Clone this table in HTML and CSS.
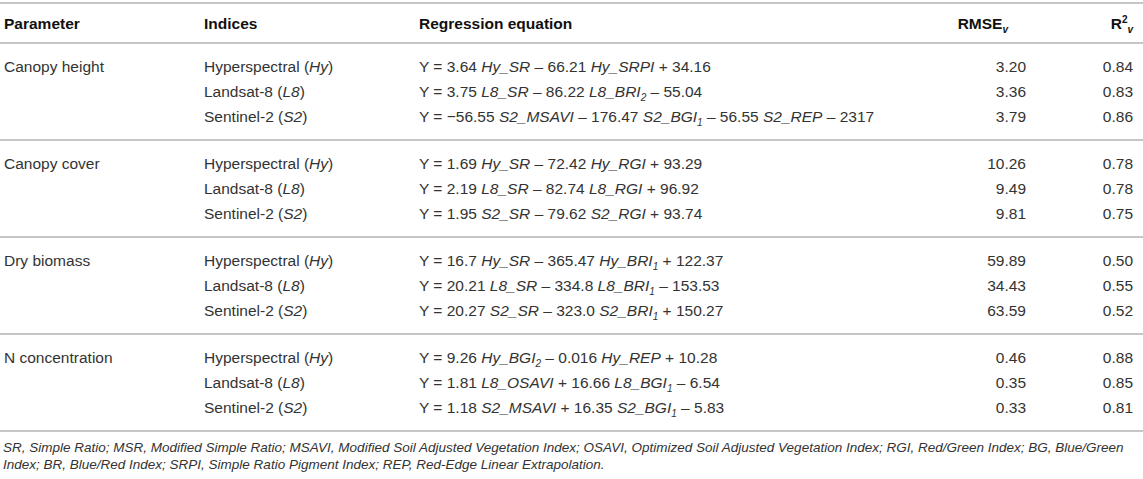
FILE: index.html
```html
<!DOCTYPE html>
<html>
<head>
    <title>Regression models</title>
    <link rel="stylesheet" href="styles.css">
</head>
<body>
    <table class="results">
        <colgroup>
            <col class="c-param">
            <col class="c-index">
            <col class="c-eq">
            <col class="c-rmse">
            <col class="c-r2">
        </colgroup>
        <thead>
            <tr>
                <th>Parameter</th>
                <th>Indices</th>
                <th>Regression equation</th>
                <th class="num">RMSE<sub>v</sub></th>
                <th class="num">R<sup>2</sup><sub>v</sub></th>
            </tr>
        </thead>
        <tbody>
            <tr class="first">
                <td>Canopy height</td>
                <td>Hyperspectral (<i>Hy</i>)</td>
                <td>Y = 3.64 <i>Hy_SR</i> – 66.21 <i>Hy_SRPI</i> + 34.16</td>
                <td class="num">3.20</td>
                <td class="num">0.84</td>
            </tr>
            <tr>
                <td></td>
                <td>Landsat-8 (<i>L8</i>)</td>
                <td>Y = 3.75 <i>L8_SR</i> – 86.22 <i>L8_BRI<sub>2</sub></i> – 55.04</td>
                <td class="num">3.36</td>
                <td class="num">0.83</td>
            </tr>
            <tr class="last">
                <td></td>
                <td>Sentinel-2 (<i>S2</i>)</td>
                <td>Y = −56.55 <i>S2_MSAVI</i> – 176.47 <i>S2_BGI<sub>1</sub></i> – 56.55 <i>S2_REP</i> – 2317</td>
                <td class="num">3.79</td>
                <td class="num">0.86</td>
            </tr>
        </tbody>
        <tbody>
            <tr class="first">
                <td>Canopy cover</td>
                <td>Hyperspectral (<i>Hy</i>)</td>
                <td>Y = 1.69 <i>Hy_SR</i> – 72.42 <i>Hy_RGI</i> + 93.29</td>
                <td class="num">10.26</td>
                <td class="num">0.78</td>
            </tr>
            <tr>
                <td></td>
                <td>Landsat-8 (<i>L8</i>)</td>
                <td>Y = 2.19 <i>L8_SR</i> – 82.74 <i>L8_RGI</i> + 96.92</td>
                <td class="num">9.49</td>
                <td class="num">0.78</td>
            </tr>
            <tr class="last">
                <td></td>
                <td>Sentinel-2 (<i>S2</i>)</td>
                <td>Y = 1.95 <i>S2_SR</i> – 79.62 <i>S2_RGI</i> + 93.74</td>
                <td class="num">9.81</td>
                <td class="num">0.75</td>
            </tr>
        </tbody>
        <tbody>
            <tr class="first">
                <td>Dry biomass</td>
                <td>Hyperspectral (<i>Hy</i>)</td>
                <td>Y = 16.7 <i>Hy_SR</i> – 365.47 <i>Hy_BRI<sub>1</sub></i> + 122.37</td>
                <td class="num">59.89</td>
                <td class="num">0.50</td>
            </tr>
            <tr>
                <td></td>
                <td>Landsat-8 (<i>L8</i>)</td>
                <td>Y = 20.21 <i>L8_SR</i> – 334.8 <i>L8_BRI<sub>1</sub></i> – 153.53</td>
                <td class="num">34.43</td>
                <td class="num">0.55</td>
            </tr>
            <tr class="last">
                <td></td>
                <td>Sentinel-2 (<i>S2</i>)</td>
                <td>Y = 20.27 <i>S2_SR</i> – 323.0 <i>S2_BRI<sub>1</sub></i> + 150.27</td>
                <td class="num">63.59</td>
                <td class="num">0.52</td>
            </tr>
        </tbody>
        <tbody>
            <tr class="first">
                <td>N concentration</td>
                <td>Hyperspectral (<i>Hy</i>)</td>
                <td>Y = 9.26 <i>Hy_BGI<sub>2</sub></i> – 0.016 <i>Hy_REP</i> + 10.28</td>
                <td class="num">0.46</td>
                <td class="num">0.88</td>
            </tr>
            <tr>
                <td></td>
                <td>Landsat-8 (<i>L8</i>)</td>
                <td>Y = 1.81 <i>L8_OSAVI</i> + 16.66 <i>L8_BGI<sub>1</sub></i> – 6.54</td>
                <td class="num">0.35</td>
                <td class="num">0.85</td>
            </tr>
            <tr class="last">
                <td></td>
                <td>Sentinel-2 (<i>S2</i>)</td>
                <td>Y = 1.18 <i>S2_MSAVI</i> + 16.35 <i>S2_BGI<sub>1</sub></i> – 5.83</td>
                <td class="num">0.33</td>
                <td class="num">0.81</td>
            </tr>
        </tbody>
    </table>
    <p class="note">SR, Simple Ratio; MSR, Modified Simple Ratio; MSAVI, Modified Soil Adjusted Vegetation Index; OSAVI, Optimized Soil Adjusted Vegetation Index; RGI, Red/Green Index; BG, Blue/Green Index; BR, Blue/Red Index; SRPI, Simple Ratio Pigment Index; REP, Red-Edge Linear Extrapolation.</p>
</body>
</html>
```
FILE: styles.css
```css
body {
    margin: 0;
    background: #fff;
    color: #333;
    font-family: "Liberation Sans", Arial, sans-serif;
    font-size: 15px;
}

.results {
    width: 1143px;
    margin-top: 2px;
    font-size: 15.5px;
    border-collapse: collapse;
    table-layout: fixed;
    border-top: 2px solid #c6c6c6;
    border-bottom: 2px solid #c6c6c6;
}

.c-param { width: 200px; }
.c-index { width: 215px; }
.c-eq { width: 485px; }
.c-rmse { width: 130px; }
.c-r2 { width: 113px; }

.results th {
    height: 38px;
    padding: 0 4px;
    text-align: left;
    font-weight: bold;
    color: #111;
    line-height: 17px;
    border-bottom: 2px solid #c6c6c6;
}

.results td {
    height: 25px;
    padding: 0 4px;
    line-height: 17px;
    white-space: nowrap;
}

.results tbody + tbody {
    border-top: 2px solid #c6c6c6;
}

.results tr.first td {
    padding-top: 10px;
}

.results tr.last td {
    padding-bottom: 10px;
}

.results .num {
    text-align: right;
}

.results .num:last-child {
    padding-right: 10px;
}

.results th.num:nth-child(4) {
    padding-right: 22px;
}

sub, sup {
    font-size: 10px;
    line-height: 0;
}

th sub {
    font-style: italic;
}

.note {
    margin: 0;
    padding: 7px 6px 0 3px;
    font-style: italic;
    font-size: 13.5px;
    line-height: 17px;
    color: #333;
}
```
